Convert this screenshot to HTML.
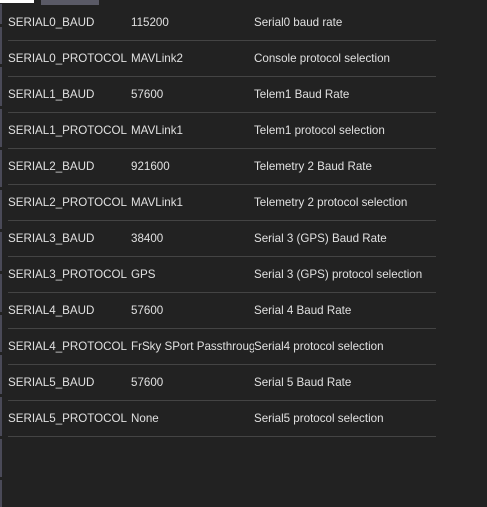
<!DOCTYPE html>
<html><head><style>
body{margin:0;width:487px;height:507px;background:#222;overflow:hidden;position:relative;font-family:"Liberation Sans",sans-serif;font-size:11.6px;color:#e0e0e0}
.bar{position:absolute;left:0;width:2px;background:#4a4a58}
.row{position:absolute;left:8px;width:428px;height:36px;border-bottom:1px solid #444}
.row span{position:absolute;top:12px;white-space:nowrap;overflow:hidden}
.a{left:0;width:123px}.b{left:123px;width:123px}.c{left:246px}
</style></head><body>
<div style="position:absolute;left:0;top:0;width:34px;height:3px;background:#fff"></div>
<div style="position:absolute;left:41px;top:0;width:58px;height:5px;background:#5a5a66"></div>
<div class="bar" style="top:4px;height:20px"></div>
<div class="bar" style="top:27px;height:37px"></div>
<div class="bar" style="top:67px;height:39px"></div>
<div class="bar" style="top:109px;height:38px"></div>
<div class="bar" style="top:150px;height:37px"></div>
<div class="bar" style="top:190px;height:39px"></div>
<div class="bar" style="top:232px;height:39px"></div>
<div class="bar" style="top:274px;height:38px"></div>
<div class="bar" style="top:315px;height:37px"></div>
<div class="bar" style="top:355px;height:39px"></div>
<div class="bar" style="top:397px;height:39px"></div>
<div class="bar" style="top:439px;height:38px"></div>
<div class="bar" style="top:480px;height:27px"></div>
<div class="row" style="top:4px"><span class="a">SERIAL0_BAUD</span><span class="b">115200</span><span class="c">Serial0 baud rate</span></div>
<div class="row" style="top:40px"><span class="a">SERIAL0_PROTOCOL</span><span class="b">MAVLink2</span><span class="c">Console protocol selection</span></div>
<div class="row" style="top:76px"><span class="a">SERIAL1_BAUD</span><span class="b">57600</span><span class="c">Telem1 Baud Rate</span></div>
<div class="row" style="top:112px"><span class="a">SERIAL1_PROTOCOL</span><span class="b">MAVLink1</span><span class="c">Telem1 protocol selection</span></div>
<div class="row" style="top:148px"><span class="a">SERIAL2_BAUD</span><span class="b">921600</span><span class="c">Telemetry 2 Baud Rate</span></div>
<div class="row" style="top:184px"><span class="a">SERIAL2_PROTOCOL</span><span class="b">MAVLink1</span><span class="c">Telemetry 2 protocol selection</span></div>
<div class="row" style="top:220px"><span class="a">SERIAL3_BAUD</span><span class="b">38400</span><span class="c">Serial 3 (GPS) Baud Rate</span></div>
<div class="row" style="top:256px"><span class="a">SERIAL3_PROTOCOL</span><span class="b">GPS</span><span class="c">Serial 3 (GPS) protocol selection</span></div>
<div class="row" style="top:292px"><span class="a">SERIAL4_BAUD</span><span class="b">57600</span><span class="c">Serial 4 Baud Rate</span></div>
<div class="row" style="top:328px"><span class="a">SERIAL4_PROTOCOL</span><span class="b">FrSky SPort Passthrough</span><span class="c">Serial4 protocol selection</span></div>
<div class="row" style="top:364px"><span class="a">SERIAL5_BAUD</span><span class="b">57600</span><span class="c">Serial 5 Baud Rate</span></div>
<div class="row" style="top:400px"><span class="a">SERIAL5_PROTOCOL</span><span class="b">None</span><span class="c">Serial5 protocol selection</span></div>
</body></html>
